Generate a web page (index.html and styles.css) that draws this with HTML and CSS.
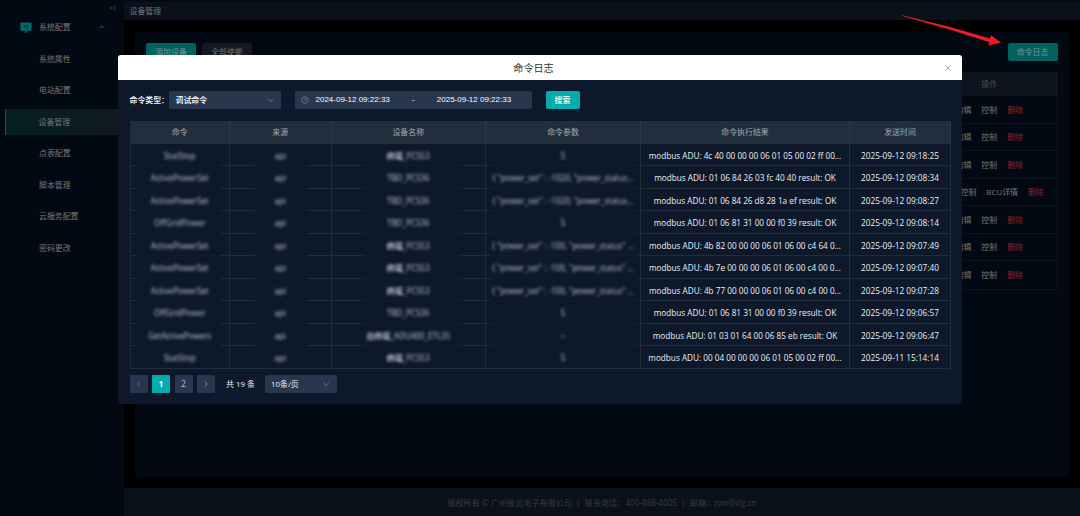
FILE: index.html
```
<!DOCTYPE html>
<html>
<head>
  <meta charset="utf-8">
  <title>设备管理</title>
  <meta name="viewport" content="width=device-width, initial-scale=1">
  <link rel="stylesheet" href="styles.css">
</head>
<body>
  <div class="layout">
    <div class="sidebar">
      <svg class="collapse" viewBox="0 0 8 6"><path d="M3.4 1.2L1.6 3l1.8 1.8M6.7 1.2L4.9 3l1.8 1.8"/></svg>
      <div class="menu-title">
        <svg class="menu-logo" viewBox="0 0 12 11">
          <rect x="0.5" y="0.5" width="11" height="8.3" rx="0.8" fill="#006d6b"/>
          <path d="M6 8v1.8M3.9 10h4.2" stroke="#006d6b" stroke-width="1"/>
          <path d="M7.4 2.6L4.6 4.6l2.8 2M4.4 3.4v2.4M7.6 2.4v4.6" stroke="#03201f" stroke-width="0.8"/>
        </svg>
        <span>系统配置</span>
        <svg class="menu-arrow" viewBox="0 0 8 6"><path d="M1.6 4.2L4 1.8l2.4 2.4"/></svg>
      </div>
      <ul class="menu">
        <li>系统属性</li>
        <li>电站配置</li>
        <li class="active">设备管理</li>
        <li>点表配置</li>
        <li>脚本管理</li>
        <li>云服务配置</li>
        <li>密码更改</li>
      </ul>
    </div>
    <div class="main">
      <div class="header">设备管理</div>
      <div class="content">
        <div class="panel">
          <div class="toolbar">
            <div class="dim-btn dim-btn--primary">添加设备</div>
            <div class="dim-btn">全部使能</div>
            <div class="dim-btn dim-btn--primary dim-btn--log">命令日志</div>
          </div>
          <div class="device-table">
            <div class="device-head"><div class="ops">操作</div></div>
            <div class="device-row"><div class="ops"><a>编辑</a><a>控制</a><a class="del">删除</a></div></div>
            <div class="device-row"><div class="ops"><a>编辑</a><a>控制</a><a class="del">删除</a></div></div>
            <div class="device-row"><div class="ops"><a>编辑</a><a>控制</a><a class="del">删除</a></div></div>
            <div class="device-row"><div class="ops"><a>编辑</a><a>控制</a><a>BCU详情</a><a class="del">删除</a></div></div>
            <div class="device-row"><div class="ops"><a>编辑</a><a>控制</a><a class="del">删除</a></div></div>
            <div class="device-row"><div class="ops"><a>编辑</a><a>控制</a><a class="del">删除</a></div></div>
            <div class="device-row"><div class="ops"><a>编辑</a><a>控制</a><a class="del">删除</a></div></div>
          </div>
        </div>
      </div>
      <div class="footer">版权所有 © 广州致远电子有限公司 &nbsp;|&nbsp; 联系电话：400-888-4005 &nbsp;|&nbsp; 邮箱：zws@zlg.cn</div>
    </div>
  </div>

  <div class="modal">
    <div class="modal-header">
      <span>命令日志</span>
      <svg class="close" viewBox="0 0 8 8"><path d="M1.2 1.2l5.6 5.6M6.8 1.2L1.2 6.8"/></svg>
    </div>
    <div class="modal-body">
      <div class="filter">
        <label>命令类型：</label>
        <div class="select type-select">
          <span>调试命令</span>
          <svg class="chevron" viewBox="0 0 8 6"><path d="M1.3 1.7L4 4.4l2.7-2.7"/></svg>
        </div>
        <div class="date-range">
          <svg class="clock" viewBox="0 0 8 8"><circle cx="4" cy="4" r="3.3"/><path d="M4 1.9v2.3h1.9"/></svg>
          <span>2024-09-12 09:22:33</span>
          <span class="sep">-</span>
          <span>2025-09-12 09:22:33</span>
        </div>
        <div class="search">搜索</div>
      </div>
      <div class="log-table">
        <div class="row head"><div>命令</div><div>来源</div><div>设备名称</div><div>命令参数</div><div>命令执行结果</div><div>发送时间</div></div>
        <div class="row"><div><i>StatStop</i></div><div><i>api</i></div><div><i><b>终端</b>_PCS53</i></div><div><i>5</i></div><div>modbus ADU: 4c 40 00 00 00 06 01 05 00 02 ff 00...</div><div class="time">2025-09-12 09:18:25</div></div>
        <div class="row"><div><i>ActivePowerSet</i></div><div><i>api</i></div><div><i>TBD_PCS36</i></div><div><i>{ "power_set" : -1020, "power_status...</i></div><div>modbus ADU: 01 06 84 26 03 fc 40 40 result: OK</div><div class="time">2025-09-12 09:08:34</div></div>
        <div class="row"><div><i>ActivePowerSet</i></div><div><i>api</i></div><div><i>TBD_PCS36</i></div><div><i>{ "power_set" : -1020, "power_status...</i></div><div>modbus ADU: 01 06 84 26 d8 28 1a ef result: OK</div><div class="time">2025-09-12 09:08:27</div></div>
        <div class="row"><div><i>OffGridPower</i></div><div><i>api</i></div><div><i>TBD_PCS36</i></div><div><i>5</i></div><div>modbus ADU: 01 06 81 31 00 00 f0 39 result: OK</div><div class="time">2025-09-12 09:08:14</div></div>
        <div class="row"><div><i>ActivePowerSet</i></div><div><i>api</i></div><div><i><b>终端</b>_PCS53</i></div><div><i>{ "power_set" : -100, "power_status" ...</i></div><div>modbus ADU: 4b 82 00 00 00 06 01 06 00 c4 64 0...</div><div class="time">2025-09-12 09:07:49</div></div>
        <div class="row"><div><i>ActivePowerSet</i></div><div><i>api</i></div><div><i><b>终端</b>_PCS53</i></div><div><i>{ "power_set" : -100, "power_status" ...</i></div><div>modbus ADU: 4b 7e 00 00 00 06 01 06 00 c4 00 0...</div><div class="time">2025-09-12 09:07:40</div></div>
        <div class="row"><div><i>ActivePowerSet</i></div><div><i>api</i></div><div><i><b>终端</b>_PCS53</i></div><div><i>{ "power_set" : -100, "power_status" ...</i></div><div>modbus ADU: 4b 77 00 00 00 06 01 06 00 c4 00 0...</div><div class="time">2025-09-12 09:07:28</div></div>
        <div class="row"><div><i>OffGridPower</i></div><div><i>api</i></div><div><i>TBD_PCS36</i></div><div><i>5</i></div><div>modbus ADU: 01 06 81 31 00 00 f0 39 result: OK</div><div class="time">2025-09-12 09:06:57</div></div>
        <div class="row"><div><i>GetActivePowers</i></div><div><i>api</i></div><div><i><b>台终端</b>_ADU400_ETL35</i></div><div><i>--</i></div><div>modbus ADU: 01 03 01 64 00 06 85 eb result: OK</div><div class="time">2025-09-12 09:06:47</div></div>
        <div class="row"><div><i>StatStop</i></div><div><i>api</i></div><div><i><b>终端</b>_PCS53</i></div><div><i>5</i></div><div>modbus ADU: 00 04 00 00 00 06 01 05 00 02 ff 00...</div><div class="time">2025-09-11 15:14:14</div></div>
      </div>
      <div class="pager">
        <div class="page"><svg viewBox="0 0 8 8"><path d="M5 1.6L2.8 4 5 6.4"/></svg></div>
        <div class="page page--on">1</div>
        <div class="page">2</div>
        <div class="page page--next"><svg viewBox="0 0 8 8"><path d="M3 1.6L5.2 4 3 6.4"/></svg></div>
        <span class="total">共 19 条</span>
        <div class="select size-select">
          <span>10条/页</span>
          <svg class="chevron" viewBox="0 0 8 6"><path d="M1.3 1.7L4 4.4l2.7-2.7"/></svg>
        </div>
      </div>
    </div>
  </div>

  <svg class="pointer" viewBox="0 0 100 32"><path d="M0.4 0.2L48 11.9L88 23.6L89 20.2L99.2 27.8L86.3 30.2L87.6 27.2L48 14.8L0.4 1z" fill="#ed1c24"/></svg>
</body>
</html>
```
FILE: styles.css
```
* {
  box-sizing: border-box;
}

body {
  margin: 0;
  width: 1080px;
  height: 516px;
  overflow: hidden;
  position: relative;
  background: #000;
  color: #74777b;
  font-family: "Open Sans", "Noto Sans CJK SC", sans-serif;
  font-size: 7.9px;
  line-height: 12px;
}

ul {
  list-style: none;
  margin: 0;
  padding: 0;
}

svg {
  display: block;
  fill: none;
}

.layout {
  display: flex;
  height: 516px;
}

/* sidebar */

.sidebar {
  width: 124px;
  padding-left: 5px;
  background: #020913;
}

.collapse {
  width: 8px;
  height: 6px;
  margin: 5px 0 3px 103.5px;
  stroke: #555b63;
  stroke-width: 0.8;
}

.menu-title {
  display: flex;
  align-items: center;
  height: 26px;
  padding-left: 15px;
}

.menu-logo {
  width: 12px;
  height: 11px;
  margin-right: 7px;
}

.menu-arrow {
  width: 8px;
  height: 6px;
  margin-left: 27px;
  stroke: #62676e;
  stroke-width: 0.8;
}

.menu {
  padding-top: 5.5px;
}

.menu li {
  height: 26px;
  margin-bottom: 5.5px;
  padding-left: 34px;
  line-height: 26px;
}

.menu .active {
  padding-left: 32.5px;
  border-left: 1.5px solid #00605e;
  background: linear-gradient(90deg, #04201f, #121821);
}

/* page */

.main {
  flex: 1;
  display: flex;
  flex-direction: column;
}

.header {
  height: 20px;
  padding-left: 5.5px;
  border-top: 2px solid #030a14;
  background: #0a111b;
  line-height: 19px;
}

.content {
  flex: 1;
  padding: 11.5px 11px;
}

.panel {
  height: 100%;
  padding: 11px 11.5px 11px 11px;
  border-radius: 4px;
  background: #030913;
}

.toolbar {
  display: flex;
  gap: 6px;
  height: 18px;
}

.dim-btn {
  width: 50px;
  border-radius: 2px;
  background: #131822;
  line-height: 18px;
  text-align: center;
}

.dim-btn--primary {
  background: #006260;
  color: #7f9594;
}

.dim-btn--log {
  margin-left: auto;
}

.device-table {
  margin-top: 11.5px;
  border: 1px solid #0e141c;
  border-top: 0;
}

.device-head,
.device-row {
  display: flex;
  justify-content: flex-end;
  align-items: center;
  height: 27.5px;
  padding-top: 1px;
  border-bottom: 1px solid #0e141c;
}

.device-head {
  height: 24px;
  background: #0e141d;
  color: #4a4e54;
}

.device-row:last-child {
  border-bottom: 0;
}

.ops {
  display: flex;
  justify-content: center;
  gap: 10px;
  width: 134.5px;
}

.ops .del {
  color: #84262a;
}

.footer {
  height: 28px;
  background: #0a111a;
  color: #393c40;
  font-size: 8.12px;
  line-height: 29px;
  text-align: center;
}

/* log dialog */

.modal {
  position: absolute;
  left: 118px;
  top: 55px;
  width: 844px;
  height: 349px;
  border-radius: 3px;
  background: #0d182a;
  color: #eef0f2;
  overflow: hidden;
}

.modal-header {
  display: flex;
  align-items: center;
  justify-content: center;
  height: 25px;
  padding: 0 10px 0 5px;
  background: #fff;
  color: #333;
  font-size: 10.1px;
}

.modal-header span {
  flex: 1;
  text-align: center;
}

.close {
  width: 8px;
  height: 8px;
  stroke: #8d9196;
  stroke-width: 0.8;
}

.modal-body {
  padding: 11px 11px 11px 11.5px;
}

.filter {
  display: flex;
  align-items: center;
  height: 18px;
}

.filter label {
  width: 39.5px;
  color: #fff;
  font-weight: 500;
  white-space: nowrap;
}

.select {
  display: flex;
  align-items: center;
  justify-content: space-between;
  height: 18px;
  padding: 0 6.5px;
  border-radius: 2px;
  background: #28374e;
}

.type-select {
  width: 112px;
  color: #fff;
  font-weight: 500;
}

.chevron {
  width: 8px;
  height: 6px;
  stroke: #8b95a4;
  stroke-width: 0.7;
}

.date-range {
  display: flex;
  align-items: center;
  width: 236.5px;
  height: 18px;
  margin: 0 14px;
  padding-left: 6px;
  border-radius: 2px;
  background: #28374e;
  color: #fff;
  font-family: "Liberation Sans", sans-serif;
  font-size: 8px;
}

.clock {
  width: 8px;
  height: 8px;
  margin-right: 6.5px;
  stroke: #8b95a4;
  stroke-width: 0.6;
}

.sep {
  width: 47px;
  text-align: center;
}

.search {
  width: 34px;
  height: 18px;
  border-radius: 2px;
  background: #00adab;
  color: #fff;
  font-weight: 500;
  line-height: 18px;
  text-align: center;
}

.log-table {
  width: 821.5px;
  margin-top: 11.5px;
  border-left: 1px solid #222d3c;
}

.row {
  display: grid;
  grid-template-columns: 99.5px 101.5px 154.5px 155px 209px 101px;
  height: 22.5px;
  /* row rule, almost hidden behind the masked values */
  background: linear-gradient(90deg,
    #222d3c 5px, #101c2d 5px 90px,
    #222d3c 90px 124px, #101c2d 124px 176px,
    #222d3c 176px 231px, #101c2d 231px 331px,
    #222d3c 331px 359px, #101c2d 359px 507px,
    #222d3c 507px) 0 100% / 100% 1px no-repeat;
}

.row:last-child {
  background: linear-gradient(#222d3c, #222d3c) 0 100% / 100% 1px no-repeat;
}

.row > div {
  border-right: 1px solid #222d3c;
  font-size: 8.2px;
  font-weight: 500;
  line-height: 23px;
  text-align: center;
  white-space: nowrap;
}

.row > .time {
  font-size: 8.25px;
}

.row.head {
  height: 23px;
  background: #222e3e;
}

.row.head > div {
  border-color: #2c3847;
  color: #a5abb3;
  font-size: 7.9px;
  font-weight: 400;
  line-height: 23px;
}

/* masked value */
.row i {
  display: inline-block;
  color: #c3c7cf;
  font-size: 8.05px;
  font-style: normal;
  filter: blur(1.5px);
}

.pager {
  display: flex;
  align-items: center;
  gap: 4.5px;
  height: 18px;
  margin-top: 6px;
}

.page {
  display: flex;
  align-items: center;
  justify-content: center;
  width: 18px;
  height: 18px;
  border-radius: 1px;
  background: #28374e;
  color: #b9bfc8;
  font-size: 8.6px;
}

.page svg {
  width: 8px;
  height: 8px;
  stroke: #66717f;
  stroke-width: 0.8;
}

.page--next svg {
  stroke: #a3abb6;
}

.page--on {
  background: #00adab;
  color: #fff;
  font-weight: 700;
}

.total {
  width: 34px;
  margin-left: 6.5px;
}

.size-select {
  width: 72px;
}

/* arrow to the log button */
.pointer {
  position: absolute;
  left: 902px;
  top: 15px;
  width: 100px;
  height: 32px;
}
```
